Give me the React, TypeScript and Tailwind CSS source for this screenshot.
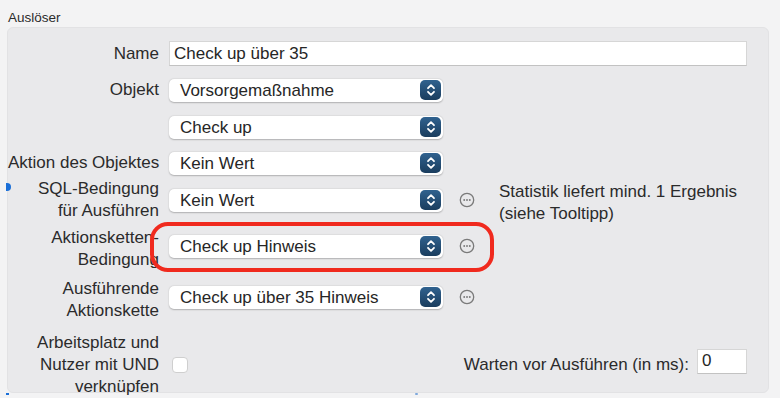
import React from 'react';

function Stepper() {
  return (
    <div className="w-[21px] h-[20px] rounded-[5px] bg-gradient-to-b from-[#30628f] to-[#1a3d5e] flex items-center justify-center">
      <svg width="10" height="14" viewBox="0 0 10 14" fill="none" stroke="white" strokeWidth="1.8" strokeLinecap="round" strokeLinejoin="round">
        <path d="M2 5.2 L5 2.2 L8 5.2" />
        <path d="M2 8.8 L5 11.8 L8 8.8" />
      </svg>
    </div>
  );
}

function Select({ value }: { value: string }) {
  return (
    <div className="w-[274px] h-[23px] bg-white rounded-[5px] shadow-[0_0.5px_1.5px_rgba(0,0,0,0.25)] flex items-center justify-between pl-[11px] pr-[2px]">
      <span className="text-[17px] text-[#262626] leading-none">{value}</span>
      <Stepper />
    </div>
  );
}

function More() {
  return (
    <svg width="16" height="16" viewBox="0 0 16 16" className="ml-[16px] shrink-0">
      <circle cx="8" cy="8" r="6.7" fill="none" stroke="#7a7a7a" strokeWidth="1.3" />
      <circle cx="5.2" cy="8" r="0.95" fill="#7a7a7a" />
      <circle cx="8" cy="8" r="0.95" fill="#7a7a7a" />
      <circle cx="10.8" cy="8" r="0.95" fill="#7a7a7a" />
    </svg>
  );
}

function Label({ children }: { children: React.ReactNode }) {
  return (
    <div className="w-[151px] shrink-0 text-right text-[17px] leading-[22px] text-[#2b2b2b] whitespace-nowrap">
      {children}
    </div>
  );
}

export default function App() {
  return (
    <div
      className="w-[780px] h-[398px] bg-[#f3f3f4] relative overflow-hidden"
      style={{ fontFamily: '"Liberation Sans", Arial, sans-serif' }}
    >
      <div className="pl-[8px] pt-[10px] h-[27px] text-[13.5px] leading-[16px] text-[#2b2b2b]">Auslöser</div>

      <div className="ml-[7px] w-[762px] h-[366px] bg-[#e9e9eb] rounded-[6px] border border-[#e2e2e4] pt-[7px]">
        <div className="flex flex-col">
          <div className="flex items-center gap-[10px] h-[37px]">
            <Label>Name</Label>
            <div className="w-[578px] h-[25px] bg-white border border-[#d6d6d6] border-b-[#c2c2c2] flex items-center pl-[4px] text-[17px] text-[#262626]">
              Check up über 35
            </div>
          </div>

          <div className="flex items-center gap-[10px] h-[36px]">
            <Label>Objekt</Label>
            <Select value="Vorsorgemaßnahme" />
          </div>

          <div className="flex items-center gap-[10px] h-[38px]">
            <Label>{''}</Label>
            <Select value="Check up" />
          </div>

          <div className="flex items-center gap-[10px] h-[34px]">
            <Label>Aktion des Objektes</Label>
            <Select value="Kein Wert" />
          </div>

          <div className="flex items-center gap-[10px] h-[40px]">
            <Label>
              SQL-Bedingung
              <br />
              für Ausführen
            </Label>
            <div className="flex items-center">
              <Select value="Kein Wert" />
              <More />
              <div className="ml-[24px] text-[17px] leading-[22px] text-[#2b2b2b] whitespace-nowrap mt-[5px]">
                Statistik liefert mind. 1 Ergebnis
                <br />
                (siehe Tooltipp)
              </div>
            </div>
          </div>

          <div className="flex items-center gap-[10px] h-[52px]">
            <Label>
              <div className="mt-[6px]">
                Aktionsketten-
                <br />
                Bedingung
              </div>
            </Label>
            <div className="flex items-center">
              <Select value="Check up Hinweis" />
              <More />
            </div>
          </div>

          <div className="flex items-center gap-[10px] h-[50px]">
            <Label>
              <div className="mt-[6px]">
                Ausführende
                <br />
                Aktionskette
              </div>
            </Label>
            <div className="flex items-center">
              <Select value="Check up über 35 Hinweis" />
              <More />
            </div>
          </div>

          <div className="flex items-center gap-[10px] h-[86px]">
            <Label>
              Arbeitsplatz und
              <br />
              Nutzer mit UND
              <br />
              verknüpfen
            </Label>
            <div className="flex items-center w-[578px]">
              <div className="ml-[3px] w-[16px] h-[16px] bg-white rounded-[4px] border border-[#cfcfcf]" />
              <div className="ml-auto text-[17px] text-[#2b2b2b] whitespace-nowrap">Warten vor Ausführen (in ms):</div>
              <div className="ml-[8px] w-[50px] h-[25px] -mt-[8px] bg-white border border-[#d6d6d6] border-b-[#c2c2c2] flex items-center pl-[4px] text-[17px] text-[#262626]">
                0
              </div>
            </div>
          </div>
        </div>
      </div>

      {/* selection dots */}
      <div className="absolute left-[6px] top-[183px] w-[5px] h-[8px] rounded-r-full bg-[#1a6fd8]" />
      <div className="absolute left-[6px] top-[393px] w-[3px] h-[2px] bg-[#1a6fd8]" />
      <div className="absolute left-[415px] top-[393px] w-[3px] h-[2px] rounded-full bg-[#7fa9dc]" />

      {/* red highlight */}
      <div className="absolute left-[150px] top-[222px] w-[344px] h-[50px] rounded-[18px] border-4 border-[#f02a1e]" />
    </div>
  );
}
